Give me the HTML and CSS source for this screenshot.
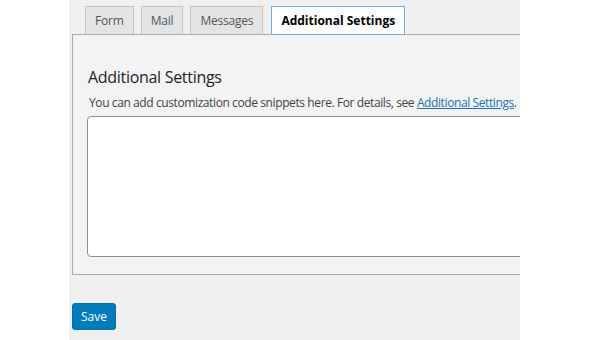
FILE: index.html
```html
<!DOCTYPE html>
<html lang="en">

<head>
    <meta charset="UTF-8">
    <title>Contact Form - Additional Settings</title>
    <link rel="stylesheet" href="styles.css">
</head>

<body>

    <div class="wrap">

        <!-- Editor Tabs -->
        <div class="tabs">
            <a class="tab" href="#">Form</a>
            <a class="tab" href="#">Mail</a>
            <a class="tab" href="#">Messages</a>
            <a class="tab active" href="#">Additional Settings</a>
        </div>

        <!-- Additional Settings Panel -->
        <div class="panel">
            <h2>Additional Settings</h2>
            <p class="description">You can add customization code snippets here. For details, see <a href="#">Additional Settings</a>.</p>
            <textarea class="code"></textarea>
        </div>

        <button class="save">Save</button>

    </div>

</body>

</html>
```

FILE: styles.css
```css
body {
    margin: 0;
    background: #fff;
    font-family: "Open Sans", "Noto Sans", sans-serif;
    font-size: 12px;
    color: #3c434a;
}

.wrap {
    margin-left: 69px;
    width: 451px;
    height: 340px;
    padding: 6px 0 0 3px;
    box-sizing: border-box;
    background: #f0f0f1;
    overflow: hidden;
}

.tabs {
    display: flex;
    gap: 7px;
    padding-left: 13px;
    align-items: flex-start;
}

.tab {
    display: block;
    height: 27px;
    line-height: 27px;
    padding: 0 9px;
    border: 1px solid #c3c4c7;
    border-bottom: none;
    background: #e4e4e4;
    color: #50575e;
    text-decoration: none;
    letter-spacing: -0.2px;
}

.tab.active {
    height: 27px;
    margin-left: 1px;
    margin-bottom: -1px;
    border: 1px solid #72aee6;
    background: #fff;
    color: #000;
    font-weight: 700;
    letter-spacing: 0;
    position: relative;
    z-index: 1;
}

.panel {
    width: 470px;
    border: 1px solid #a7aaad;
    background: #f3f3f3;
    padding: 31px 0 17px 14px;
}

.panel h2 {
    margin: 0 0 6px 1px;
    font-size: 16px;
    font-weight: 400;
    color: #1d2327;
    letter-spacing: -0.3px;
}

.description {
    margin: 0 0 5px 2px;
    font-size: 12px;
    letter-spacing: -0.4px;
}

.description a {
    color: #2271b1;
}

.code {
    display: block;
    width: 500px;
    height: 141px;
    box-sizing: border-box;
    border: 1px solid #8c8f94;
    border-radius: 4px;
    background: #fff;
    resize: none;
}

.save {
    margin-top: 28px;
    height: 27px;
    padding: 0 8px;
    border: 1px solid #0071a1;
    border-radius: 3px;
    background: #007cba;
    color: #fff;
    font-family: inherit;
    font-size: 12px;
}
```
